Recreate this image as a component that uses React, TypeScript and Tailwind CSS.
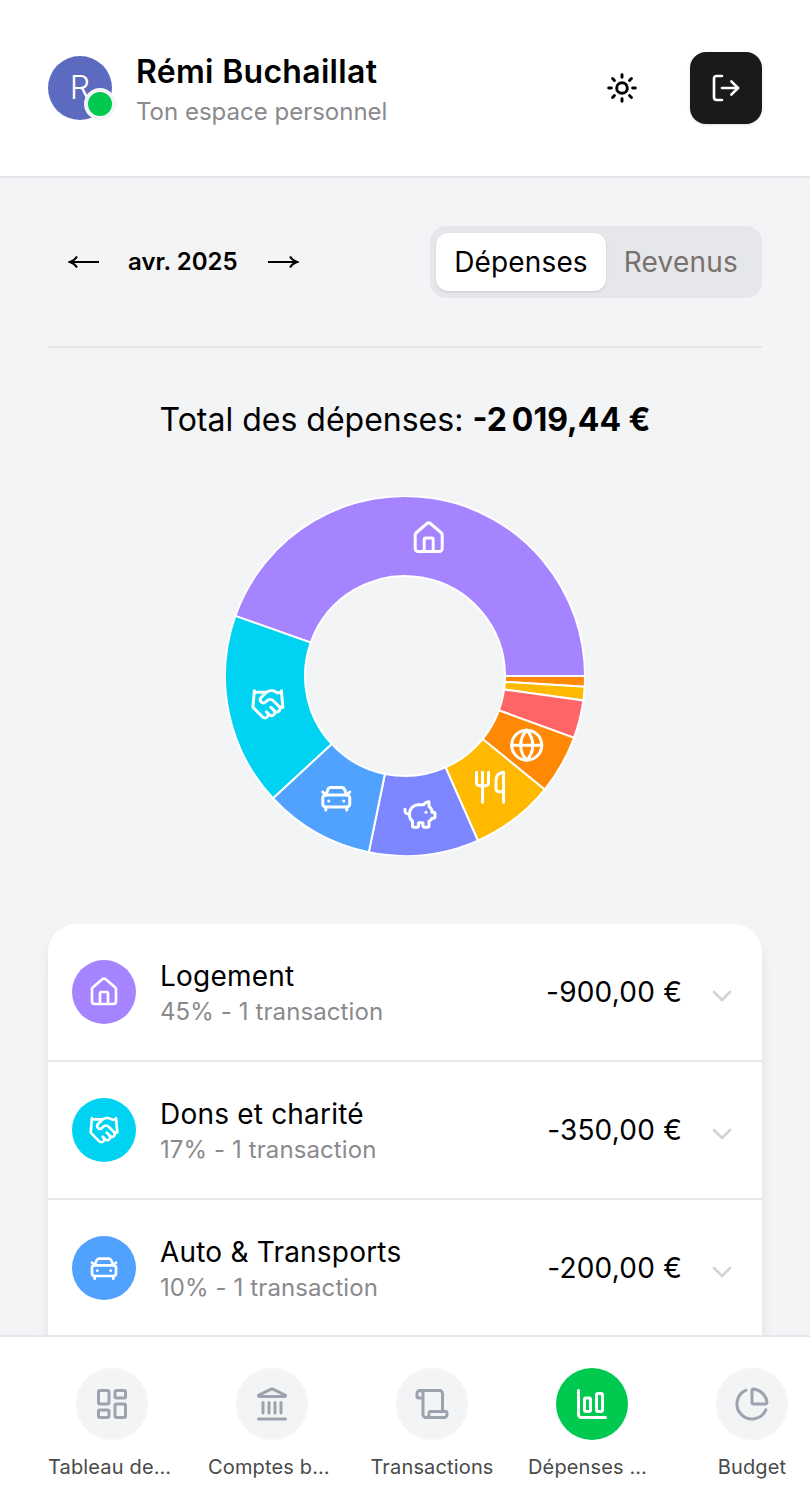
import React from 'react';
import {
  Sun,
  LogOut,
  House,
  Handshake,
  CarFront,
  PiggyBank,
  Utensils,
  Globe,
  ChevronDown,
  LayoutDashboard,
  Landmark,
  Scroll,
  ChartColumnBig,
  ChartPie,
  LucideIcon,
} from 'lucide-react';

type Slice = { from: number; to: number; color: string; icon?: LucideIcon };

// angles are clockwise from north
const slices: Slice[] = [
  { from: -70.5, to: 90, color: '#a684ff', icon: House },
  { from: 90, to: 93.4, color: '#ff8904' },
  { from: 93.4, to: 97.8, color: '#ffb900' },
  { from: 97.8, to: 110.1, color: '#ff6467' },
  { from: 110.1, to: 129.1, color: '#ff8904', icon: Globe },
  { from: 129.1, to: 156.1, color: '#ffb900', icon: Utensils },
  { from: 156.1, to: 191.6, color: '#7c86ff', icon: PiggyBank },
  { from: 191.6, to: 227.2, color: '#51a2ff', icon: CarFront },
  { from: 227.2, to: 289.5, color: '#00d3f2', icon: Handshake },
];

const categories = [
  { name: 'Logement', info: '45% - 1 transaction', amount: '-900,00 €', color: 'bg-[#a684ff]', icon: House },
  { name: 'Dons et charité', info: '17% - 1 transaction', amount: '-350,00 €', color: 'bg-[#00d3f2]', icon: Handshake },
  { name: 'Auto & Transports', info: '10% - 1 transaction', amount: '-200,00 €', color: 'bg-[#51a2ff]', icon: CarFront },
  { name: 'Épargne', info: '10% - 1 transaction', amount: '-200,00 €', color: 'bg-[#7c86ff]', icon: PiggyBank },
];

const navItems = [
  { label: 'Tableau de bord', icon: LayoutDashboard, labelClass: 'pr-1' },
  { label: 'Comptes bancaires', icon: Landmark, labelClass: '' },
  { label: 'Transactions', icon: Scroll, labelClass: '' },
  { label: 'Dépenses mensuelles', icon: ChartColumnBig, labelClass: '', active: true },
  { label: 'Budget', icon: ChartPie, labelClass: '' },
];

const C = 180;
const OUTER = 180;
const INNER = 100;

const polar = (r: number, deg: number) => {
  const a = (deg * Math.PI) / 180;
  return [C + r * Math.sin(a), C - r * Math.cos(a)];
};

const arcPath = (from: number, to: number) => {
  const [x1, y1] = polar(OUTER, from);
  const [x2, y2] = polar(OUTER, to);
  const [x3, y3] = polar(INNER, to);
  const [x4, y4] = polar(INNER, from);
  const large = to - from > 180 ? 1 : 0;
  return `M${x1} ${y1}A${OUTER} ${OUTER} 0 ${large} 1 ${x2} ${y2}L${x3} ${y3}A${INNER} ${INNER} 0 ${large} 0 ${x4} ${y4}Z`;
};

const Donut: React.FC = () => (
  <svg width={360} height={360} viewBox="0 0 360 360">
    {slices.map((s, i) => (
      <path key={i} d={arcPath(s.from, s.to)} fill={s.color} stroke="#fff" strokeWidth={2} />
    ))}
    {slices.map((s, i) => {
      if (!s.icon) return null;
      const Icon = s.icon;
      const [x, y] = polar(140, (s.from + s.to) / 2);
      return <Icon key={i} x={x - 18} y={y - 18} size={36} color="#fff" strokeWidth={2} />;
    })}
  </svg>
);

const ThinArrow: React.FC<{ flip?: boolean }> = ({ flip }) => (
  <svg width={32} height={20} viewBox="0 0 32 20" fill="none" stroke="#000" strokeWidth={2} className={flip ? 'rotate-180' : ''}>
    <path d="M2 10H31" />
    <path d="M9 4.5C7.5 7 5 9 2 10C5 11 7.5 13 9 15.5" />
  </svg>
);

const App: React.FC = () => {
  return (
    <div className="h-[1506px] flex flex-col overflow-hidden bg-[#f3f4f6] text-black font-['Inter',sans-serif]">
      <header className="h-[178px] shrink-0 bg-white border-b-2 border-[#e5e7eb] px-12 pt-[52px] flex items-start justify-between">
        <div className="flex items-start gap-6 pt-1">
          <div className="relative w-16 h-16">
            <div className="w-16 h-16 rounded-full bg-[#5c6bc0] flex items-center justify-center text-white text-[32px] font-light leading-none">
              R
            </div>
            <span className="absolute -right-1 bottom-0 w-8 h-8 rounded-full bg-[#00c950] border-4 border-[#f3f4f6]" />
          </div>
          <div>
            <div className="text-[32px] leading-[32px] font-semibold tracking-[0.3px]">Rémi Buchaillat</div>
            <div className="text-[24px] leading-[32px] mt-2 text-[#8a8a8e]">Ton espace personnel</div>
          </div>
        </div>
        <div className="flex items-center gap-[52px]">
          <Sun size={32} strokeWidth={2.2} />
          <button className="w-[72px] h-[72px] rounded-2xl bg-[#1a1a1a] shadow-sm flex items-center justify-center">
            <LogOut size={32} strokeWidth={2} color="#fff" />
          </button>
        </div>
      </header>

      <main className="flex-1 min-h-0 overflow-hidden px-12 pt-12">
        <div className="flex items-center justify-between">
          <div className="flex items-center pl-5">
            <ThinArrow />
            <span className="ml-7 mr-[29px] text-[24px] font-semibold">avr. 2025</span>
            <ThinArrow flip />
          </div>
          <div className="h-[72px] rounded-2xl bg-[#e5e7eb] pl-1.5 pr-6 flex items-center gap-[18px]">
            <div className="h-[58px] px-[18px] rounded-xl bg-white shadow-sm flex items-center text-[28px] tracking-[0.15px]">Dépenses</div>
            <div className="text-[28px] tracking-[0.2px] text-[#78716c]">Revenus</div>
          </div>
        </div>

        <div className="mt-12 border-t-2 border-[#e7e5e4]" />

        <div className="mt-12 text-center text-[32px] leading-[48px]">
          Total des dépenses: <span className="font-bold">-2{'\u202f'}019,44 €</span>
        </div>

        <div className="mt-[52px] mb-[68px] flex justify-center">
          <Donut />
        </div>

        <div className="bg-white rounded-[28px] shadow-lg">
          {categories.map((c) => {
            const Icon = c.icon;
            return (
              <div key={c.name} className="h-[138px] border-b-2 border-[#e5e7eb] pl-6 pr-6 flex items-center">
                <div className={`w-16 h-16 rounded-full flex items-center justify-center ${c.color}`}>
                  <Icon size={32} color="#fff" strokeWidth={2} />
                </div>
                <div className="ml-6 mt-[2px] flex-1">
                  <div className="text-[28px] leading-[36px] tracking-[0.2px]">{c.name}</div>
                  <div className="text-[24px] leading-[32px] mt-[2px] tracking-[0.1px] text-[#8a8a8e]">{c.info}</div>
                </div>
                <div className="text-[28px] tracking-[0.2px]">{c.amount}</div>
                <ChevronDown size={32} className="ml-6 mt-2 text-[#d1d5db]" />
              </div>
            );
          })}
        </div>
      </main>

      <nav className="h-[171px] shrink-0 bg-white border-t-2 border-[#e5e7eb] overflow-hidden pl-12 pt-[31px] flex gap-8">
        {navItems.map((item) => {
          const Icon = item.icon;
          return (
            <div key={item.label} className="w-32 shrink-0 flex flex-col items-center">
              <div
                className={`w-[72px] h-[72px] rounded-full flex items-center justify-center ${item.active ? 'bg-[#00c950]' : 'bg-[#f3f4f6]'}`}
              >
                <Icon size={36} strokeWidth={2} color={item.active ? '#fff' : '#9ca3af'} />
              </div>
              <div className={`w-full mt-3 truncate text-center text-[20px] leading-[30px] tracking-[0.15px] text-[#4a4a4a] ${item.labelClass}`}>
                {item.label}
              </div>
            </div>
          );
        })}
      </nav>
    </div>
  );
};

export default App;
